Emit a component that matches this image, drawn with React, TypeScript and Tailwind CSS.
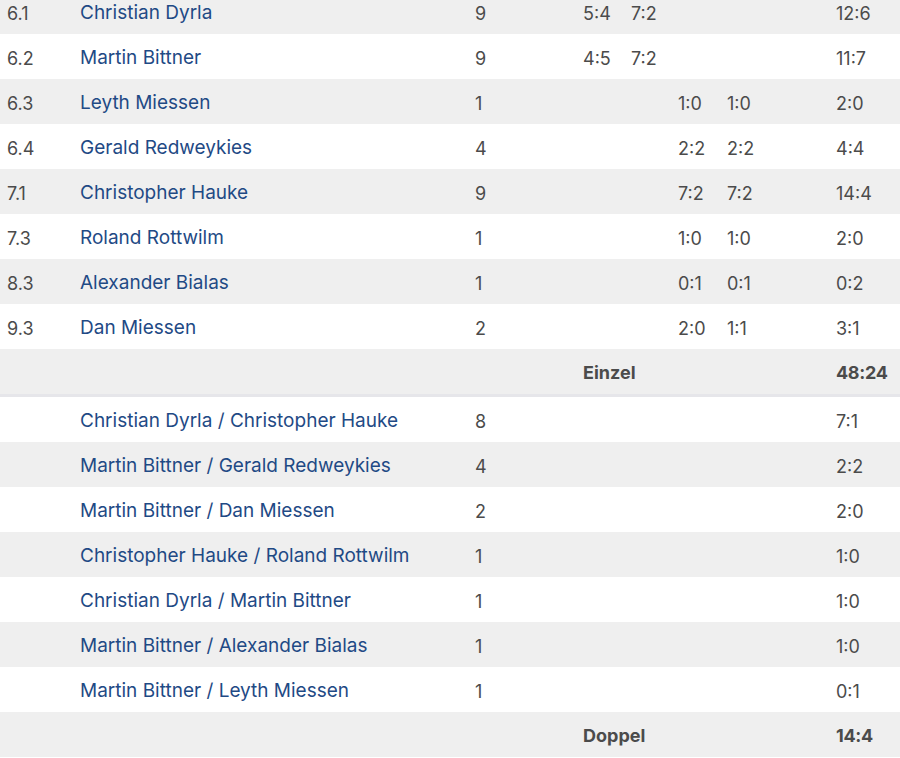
import React from "react";

type Row = {
  pos?: string;
  name: string;
  count: string;
  a?: string;
  b?: string;
  c?: string;
  d?: string;
  total: string;
};

const einzel: Row[] = [
  { pos: "6.1", name: "Christian Dyrla", count: "9", a: "5:4", b: "7:2", total: "12:6" },
  { pos: "6.2", name: "Martin Bittner", count: "9", a: "4:5", b: "7:2", total: "11:7" },
  { pos: "6.3", name: "Leyth Miessen", count: "1", c: "1:0", d: "1:0", total: "2:0" },
  { pos: "6.4", name: "Gerald Redweykies", count: "4", c: "2:2", d: "2:2", total: "4:4" },
  { pos: "7.1", name: "Christopher Hauke", count: "9", c: "7:2", d: "7:2", total: "14:4" },
  { pos: "7.3", name: "Roland Rottwilm", count: "1", c: "1:0", d: "1:0", total: "2:0" },
  { pos: "8.3", name: "Alexander Bialas", count: "1", c: "0:1", d: "0:1", total: "0:2" },
  { pos: "9.3", name: "Dan Miessen", count: "2", c: "2:0", d: "1:1", total: "3:1" },
];

const doppel: Row[] = [
  { name: "Christian Dyrla / Christopher Hauke", count: "8", total: "7:1" },
  { name: "Martin Bittner / Gerald Redweykies", count: "4", total: "2:2" },
  { name: "Martin Bittner / Dan Miessen", count: "2", total: "2:0" },
  { name: "Christopher Hauke / Roland Rottwilm", count: "1", total: "1:0" },
  { name: "Christian Dyrla / Martin Bittner", count: "1", total: "1:0" },
  { name: "Martin Bittner / Alexander Bialas", count: "1", total: "1:0" },
  { name: "Martin Bittner / Leyth Miessen", count: "1", total: "0:1" },
];

function PlayerRow({ row, striped }: { row: Row; striped: boolean }) {
  return (
    <tr className={`h-[45px] text-[#4b4b4b] ${striped ? "bg-[#efefef]" : "bg-white"}`}>
      <td className="pl-[7px] pt-[3px]">{row.pos}</td>
      <td className="pt-[4px] text-[19px] text-[#1f4a85]">{row.name}</td>
      <td className="pt-[3px]">{row.count}</td>
      <td className="pt-[3px]">{row.a}</td>
      <td className="pt-[3px]">{row.b}</td>
      <td className="pt-[3px]">{row.c}</td>
      <td className="pt-[3px]">{row.d}</td>
      <td className="pt-[3px]">{row.total}</td>
    </tr>
  );
}

function SumRow({ label, total }: { label: string; total: string }) {
  return (
    <tr className="h-[45px] bg-[#efefef] font-bold text-[#4b4b4b]">
      <td colSpan={3} />
      <td colSpan={4} className="pt-[2px]">{label}</td>
      <td className="pt-[2px] tracking-[-0.3px]">{total}</td>
    </tr>
  );
}

export default function App() {
  return (
    <div className="w-[900px] h-[758px] overflow-hidden bg-white font-['Inter',sans-serif] text-[18px]">
      <table className="w-full table-fixed border-collapse -mt-[11px]">
        <colgroup>
          <col className="w-[80px]" />
          <col className="w-[395px]" />
          <col className="w-[108px]" />
          <col className="w-[48px]" />
          <col className="w-[47px]" />
          <col className="w-[49px]" />
          <col className="w-[109px]" />
          <col className="w-[64px]" />
        </colgroup>
        <tbody>
          {einzel.map((r, i) => (
            <PlayerRow key={r.pos} row={r} striped={i % 2 === 0} />
          ))}
          <SumRow label="Einzel" total="48:24" />
          <tr className="h-[3px] bg-[#e6e6ea]">
            <td colSpan={8} className="p-0" />
          </tr>
          {doppel.map((r, i) => (
            <PlayerRow key={r.name} row={r} striped={i % 2 === 1} />
          ))}
          <SumRow label="Doppel" total="14:4" />
        </tbody>
      </table>
    </div>
  );
}
